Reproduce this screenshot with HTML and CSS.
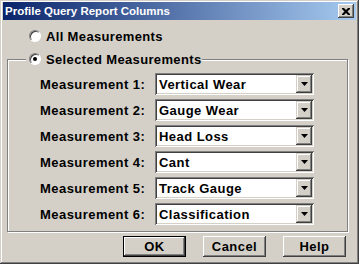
FILE: index.html
```html
<!DOCTYPE html>
<html lang="en">
<head>
    <meta charset="UTF-8">
    <title>Profile Query Report Columns</title>
    <link rel="stylesheet" href="styles.css">
</head>
<body>
    <div class="window">
        <div class="titlebar">
            <span class="title">Profile Query Report Columns</span>
            <button class="close">
                <svg width="8" height="7" viewBox="0 0 8 7"><path d="M0 0h2l2 2 2-2h2v1l-2.5 2.5 2.5 2.5v1h-2l-2-2-2 2h-2v-1l2.5-2.5-2.5-2.5z" fill="#000"/></svg>
            </button>
        </div>
        <div class="content">
            <label class="radio-row all"><span class="radio"></span>All Measurements</label>

            <fieldset class="group">
                <legend><label class="radio-row"><span class="radio checked"></span>Selected Measurements</label></legend>

                <div class="row">
                    <span class="label">Measurement 1:</span>
                    <div class="combo"><span class="value">Vertical Wear</span><span class="arrow"><svg width="7" height="4" viewBox="0 0 7 4"><path d="M0 0h7l-3.5 4z" fill="#000"/></svg></span></div>
                </div>
                <div class="row">
                    <span class="label">Measurement 2:</span>
                    <div class="combo"><span class="value">Gauge Wear</span><span class="arrow"><svg width="7" height="4" viewBox="0 0 7 4"><path d="M0 0h7l-3.5 4z" fill="#000"/></svg></span></div>
                </div>
                <div class="row">
                    <span class="label">Measurement 3:</span>
                    <div class="combo"><span class="value">Head Loss</span><span class="arrow"><svg width="7" height="4" viewBox="0 0 7 4"><path d="M0 0h7l-3.5 4z" fill="#000"/></svg></span></div>
                </div>
                <div class="row">
                    <span class="label">Measurement 4:</span>
                    <div class="combo"><span class="value">Cant</span><span class="arrow"><svg width="7" height="4" viewBox="0 0 7 4"><path d="M0 0h7l-3.5 4z" fill="#000"/></svg></span></div>
                </div>
                <div class="row">
                    <span class="label">Measurement 5:</span>
                    <div class="combo"><span class="value">Track Gauge</span><span class="arrow"><svg width="7" height="4" viewBox="0 0 7 4"><path d="M0 0h7l-3.5 4z" fill="#000"/></svg></span></div>
                </div>
                <div class="row">
                    <span class="label">Measurement 6:</span>
                    <div class="combo"><span class="value">Classification</span><span class="arrow"><svg width="7" height="4" viewBox="0 0 7 4"><path d="M0 0h7l-3.5 4z" fill="#000"/></svg></span></div>
                </div>
            </fieldset>

            <div class="buttons">
                <button class="btn default">OK</button>
                <button class="btn">Cancel</button>
                <button class="btn">Help</button>
            </div>
        </div>
    </div>
</body>
</html>
```

FILE: styles.css
```css
body {
    margin: 0;
    background: #d4d0c8;
    font-family: "Liberation Sans", Arial, sans-serif;
}
.window {
    width: 359px;
    height: 264px;
    box-sizing: border-box;
    padding: 2px 3px 3px 3px;
    background: #d4d0c8;
    box-shadow: inset -1px -1px #404040, inset 1px 1px #d4d0c8, inset -2px -2px #808080, inset 2px 2px #fff;
    display: flex;
    flex-direction: column;
}
.titlebar {
    height: 18px;
    display: flex;
    align-items: center;
    justify-content: space-between;
    background: linear-gradient(to right, #0a246a, #a6caf0);
}
.title {
    color: white;
    font-weight: bold;
    font-size: 11.5px;
    padding-left: 2px;
}
.close {
    width: 16px;
    height: 14px;
    margin-right: 2px;
    padding: 0;
    border: none;
    background: #d4d0c8;
    box-shadow: inset -1px -1px #404040, inset 1px 1px #fff, inset -2px -2px #808080;
    display: flex;
    align-items: center;
    justify-content: center;
}
.content {
    flex: 1;
    display: flex;
    flex-direction: column;
}
.radio-row {
    display: flex;
    align-items: center;
    height: 16px;
    font-size: 13px;
    font-weight: bold;
    letter-spacing: 0.35px;
    color: #000;
}
.radio-row.all {
    margin: 8px 0 0 26px;
}
.radio {
    width: 12px;
    height: 12px;
    box-sizing: border-box;
    border-radius: 50%;
    background: white;
    border: 1px solid;
    border-color: #808080 #fff #fff #808080;
    box-shadow: inset 1px 1px #404040;
    margin-right: 5px;
    position: relative;
}
.radio.checked::after {
    content: "";
    position: absolute;
    left: 3px;
    top: 3px;
    width: 4px;
    height: 4px;
    border-radius: 50%;
    background: #000;
}
.group {
    margin: 7px 8px 0 4px;
    padding: 6px 0 6px 0;
    border: 1px solid #808080;
    box-shadow: inset 1px 1px #fff, 1px 1px #fff;
    display: flex;
    flex-direction: column;
    gap: 4px;
    min-width: 0;
}
.group legend {
    margin-left: 18px;
    padding: 0 1px 0 3px;
    background: #d4d0c8;
}
.row {
    display: flex;
    align-items: center;
    padding-left: 32px;
}
.label {
    width: 115px;
    font-size: 13px;
    font-weight: bold;
    letter-spacing: 0.45px;
}
.combo {
    width: 159px;
    height: 22px;
    box-sizing: border-box;
    padding: 2px;
    background: white;
    box-shadow: inset 1px 1px #808080, inset -1px -1px #fff, inset 2px 2px #404040, inset -2px -2px #d4d0c8;
    display: flex;
    align-items: center;
}
.value {
    flex: 1;
    padding-left: 2px;
    font-size: 13px;
    font-weight: bold;
    letter-spacing: 0.45px;
}
.arrow {
    width: 16px;
    height: 18px;
    background: #d4d0c8;
    box-shadow: inset -1px -1px #404040, inset 1px 1px #d4d0c8, inset -2px -2px #808080, inset 2px 2px #fff;
    display: flex;
    align-items: center;
    justify-content: center;
}
.buttons {
    display: flex;
    justify-content: flex-end;
    gap: 17px;
    margin-top: 4px;
    padding-right: 10px;
}
.btn {
    width: 63px;
    height: 21px;
    padding: 0;
    border: none;
    background: #d4d0c8;
    font-family: "Liberation Sans", Arial, sans-serif;
    font-size: 13px;
    font-weight: bold;
    letter-spacing: 0.45px;
    color: #000;
    box-shadow: inset -1px -1px #404040, inset 1px 1px #fff, inset -2px -2px #808080, inset 2px 2px #d4d0c8;
}
.btn.default {
    box-shadow: inset 0 0 0 1px #000, inset -2px -2px #404040, inset 2px 2px #fff, inset -3px -3px #808080;
}
```
